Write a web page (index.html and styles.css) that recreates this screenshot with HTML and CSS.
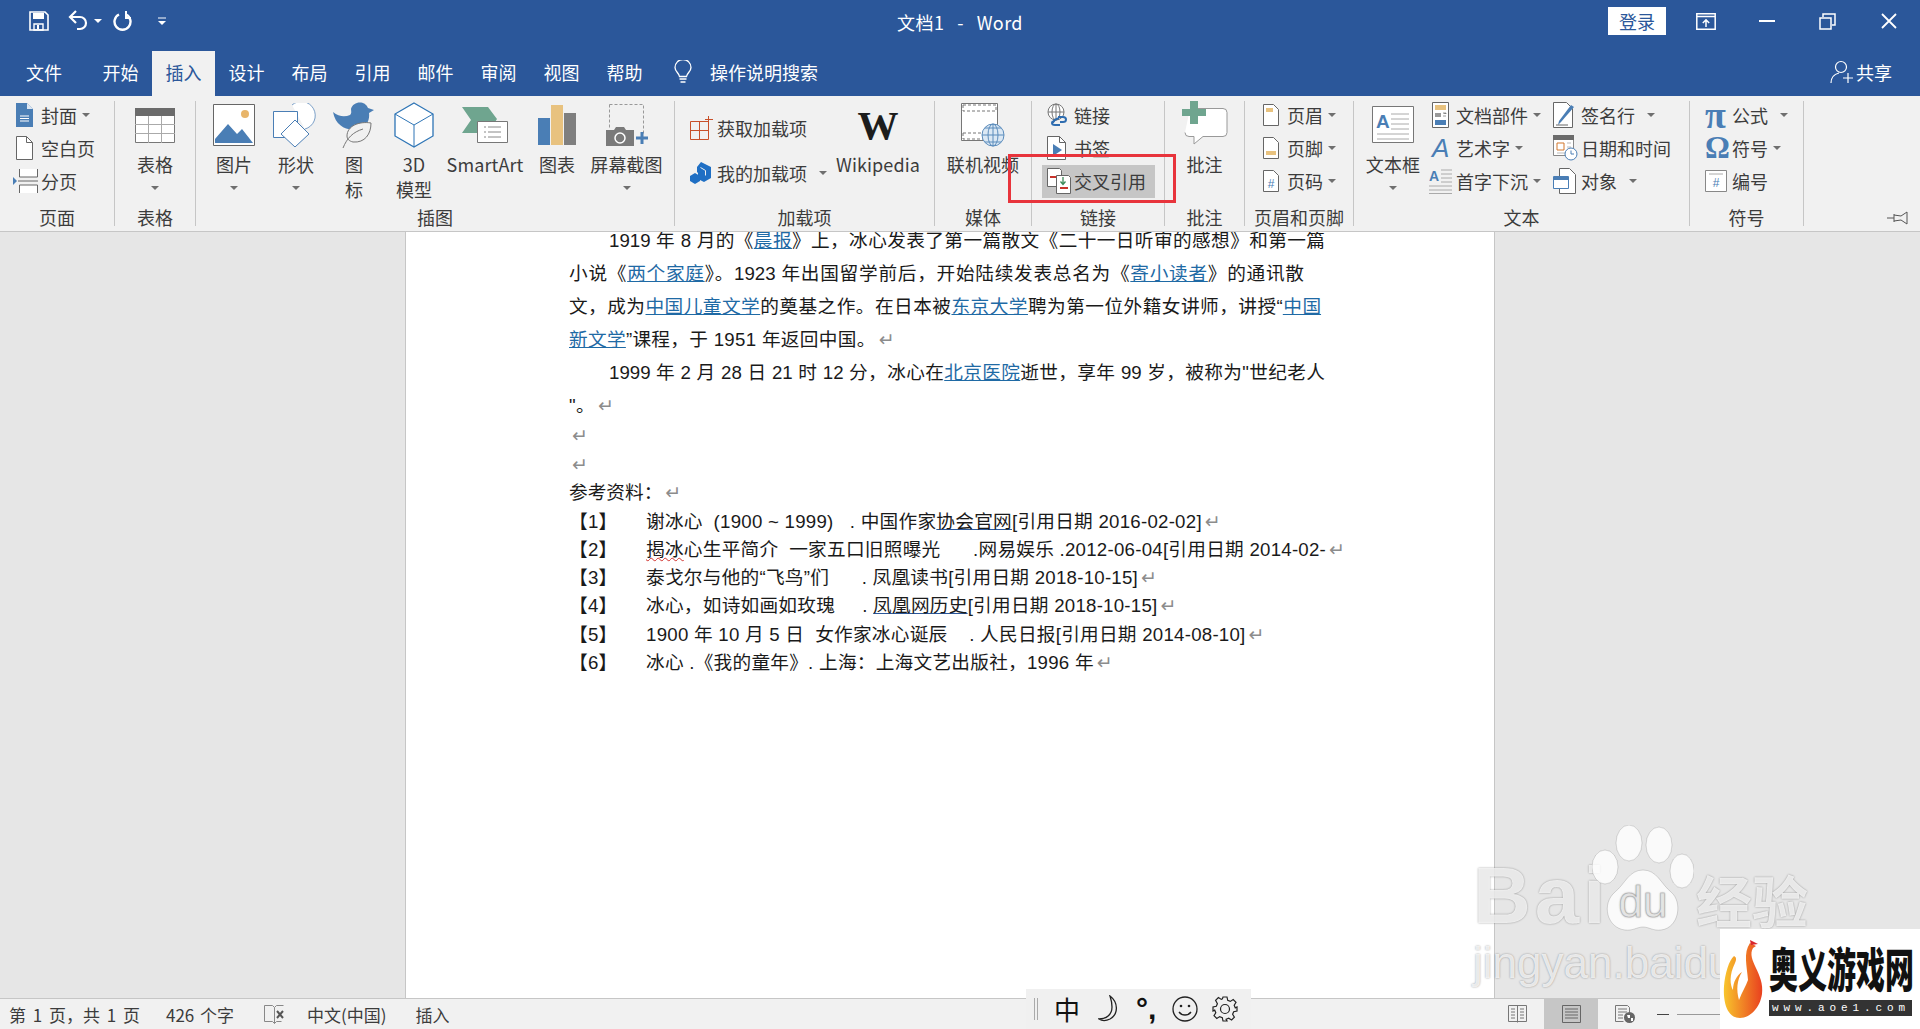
FILE: index.html
```html
<!DOCTYPE html>
<html lang="zh-CN">
<head>
    <meta charset="UTF-8">
    <title>文档1 - Word</title>
    <link rel="stylesheet" href="styles.css">
</head>
<body>
    <header class="titlebar">
        <div class="qat">
            <svg class="qat-save" width="20" height="20" viewBox="0 0 20 20"><path d="M1 1h15l3 3v15H1z" fill="none" stroke="#fff" stroke-width="1.6"/><path d="M4 2h11v6H4z" fill="#fff"/><path d="M5 13h9v6H5z" fill="none" stroke="#fff" stroke-width="1.4"/><path d="M8 14h2v4H8z" fill="#fff"/></svg>
            <svg class="qat-undo" width="22" height="22" viewBox="0 0 22 22"><path d="M3 7h10a5.500 5.500 0 0 1 0 12h-3" fill="none" stroke="#fff" stroke-width="2.2"/><path d="M9 1L3 7l6 6" fill="none" stroke="#fff" stroke-width="2.2"/></svg>
            <i class="caret caret-white qat-caret"></i>
            <svg class="qat-redo" width="20" height="22" viewBox="0 0 20 22"><path d="M7 4.500a8 8 0 1 0 7 0" fill="none" stroke="#fff" stroke-width="2.4"/><path d="M14 1v7h5" fill="none" stroke="#fff" stroke-width="2"/></svg>
            <svg class="qat-more" width="8" height="9" viewBox="0 0 8 9"><path d="M0 1h8" stroke="#fff"/><path d="M0 4h8l-4 4z" fill="#fff"/></svg>
        </div>
        <div class="doc-title">文档1 &nbsp;-&nbsp; Word</div>
        <div class="win-controls">
            <button class="login-btn">登录</button>
            <div class="win-btn"><svg width="20" height="17" viewBox="0 0 20 17"><path d="M.8.800h18.400v15.400H.8z" fill="none" stroke="#fff" stroke-width="1.500"/><path d="M1 3.500h18" stroke="#fff" stroke-width="1.500"/><path d="M10 14V7M6.800 10L10 6.800l3.200 3.200" fill="none" stroke="#fff" stroke-width="1.500"/></svg></div>
            <div class="win-btn"><svg width="16" height="2" viewBox="0 0 16 2"><path d="M0 1h16" stroke="#fff" stroke-width="2"/></svg></div>
            <div class="win-btn"><svg width="17" height="17" viewBox="0 0 17 17"><path d="M1 5h11v11H1z" fill="none" stroke="#fff" stroke-width="1.500"/><path d="M4 4V1h12v11h-3" fill="none" stroke="#fff" stroke-width="1.500"/></svg></div>
            <div class="win-btn"><svg width="16" height="16" viewBox="0 0 16 16"><path d="M1 1l14 14M15 1L1 15" stroke="#fff" stroke-width="1.800"/></svg></div>
        </div>
    </header>

    <nav class="tabs">
        <a class="tab tab-file">文件</a>
        <a class="tab">开始</a>
        <a class="tab active">插入</a>
        <a class="tab">设计</a>
        <a class="tab">布局</a>
        <a class="tab">引用</a>
        <a class="tab">邮件</a>
        <a class="tab">审阅</a>
        <a class="tab">视图</a>
        <a class="tab">帮助</a>
        <div class="tell-me">
            <svg width="20" height="24" viewBox="0 0 20 24"><path d="M6.500 16.500C6 13 2 11.500 2 7.500a8 8 0 0 1 16 0c0 4-4 5.500-4.500 9z" fill="none" stroke="#fff" stroke-width="1.300"/><path d="M6.500 19h7M7.500 22h5" stroke="#fff" stroke-width="1.500"/></svg>
            <span>操作说明搜索</span>
        </div>
        <div class="share">
            <svg width="24" height="24" viewBox="0 0 24 24"><circle cx="11" cy="7" r="5.500" fill="none" stroke="#fff" stroke-width="1.200"/><path d="M1 23c0-6 4-9 8-10" fill="none" stroke="#fff" stroke-width="1.200"/><path d="M13 18h10M18 13v10" stroke="#fff" stroke-width="1.200"/></svg>
            <span>共享</span>
        </div>
    </nav>

    <div class="ribbon">
        <section class="group g-pages">
            <div class="group-body col">
                <div class="row"><span class="ico"><svg width="17" height="24" viewBox="0 0 17 24"><path d="M0 0h11l6 6v18H0z" fill="#4a7eb5"/><path d="M11 0v6h6" fill="#dce6f1"/><path d="M4 13h9M4 15.500h9M4 18h9" stroke="#fff"/></svg></span>封面<i class="caret"></i></div>
                <div class="row"><span class="ico"><svg width="17" height="24" viewBox="0 0 17 24"><path d="M.5.500h10l6 6v17H.5z" fill="#fff" stroke="#666"/><path d="M10.500.500v6h6" fill="none" stroke="#666"/></svg></span>空白页</div>
                <div class="row"><span class="ico ico-break"><svg width="25" height="24" viewBox="0 0 25 24"><path d="M0 8l4 4-4 4z" fill="#4a7eb5"/><path d="M6.500 0v8h18V0M6.500 24v-8h18v8" fill="#fff" stroke="#666"/><path d="M5 12h20" stroke="#666"/></svg></span>分页</div>
            </div>
            <div class="group-label">页面</div>
        </section>
        <i class="sep"></i>
        <section class="group g-table">
            <div class="group-body">
                <div class="big">
                    <span class="big-ico"><svg width="40" height="35" viewBox="0 0 40 35"><path d="M.5.500h39v34H.5z" fill="#fff" stroke="#777"/><path d="M0 0h40v8H0z" fill="#6b6b6b"/><path d="M0 16.500h40M0 25.500h40M13.500 8v27M26.500 8v27" stroke="#aaa"/></svg></span>
                    <span class="big-label">表格</span><i class="caret"></i>
                </div>
            </div>
            <div class="group-label">表格</div>
        </section>
        <i class="sep"></i>
        <section class="group g-illus">
            <div class="group-body">
                <div class="big">
                    <span class="big-ico"><svg width="42" height="42" viewBox="0 0 42 42"><path d="M.5.500h41v41H.5z" fill="#fff" stroke="#666"/><circle cx="32" cy="10" r="4" fill="#e8b56a"/><path d="M2 39V35L15 20l9 10 5-5 11 14z" fill="#4a7eb5"/></svg></span>
                    <span class="big-label">图片</span><i class="caret"></i>
                </div>
                <div class="big">
                    <span class="big-ico"><svg width="46" height="44" viewBox="0 0 46 44"><path d="M19 2a14 14 0 1 1 13 24" fill="#fff" stroke="#7ba0c8"/><path d="M.5 8.500h24v26H.5z" fill="#fff" stroke="#4a7eb5"/><path d="M22 17l14 14-14 13L8 31z" fill="#fff" stroke="#4a7eb5"/></svg></span>
                    <span class="big-label">形状</span><i class="caret"></i>
                </div>
                <div class="big">
                    <span class="big-ico"><svg width="42" height="46" viewBox="0 0 42 46"><path d="M18 7c2-8 14-9 17-1l6 2-5 3c1 8-3 13-9 15-10 4-24 0-27-16 6 5 12 5 17 3 2-2 1-4 1-6z" fill="#4a7eb5"/><path d="M38 21C26 19 14 24 14 34c0 3 2 5 6 6 12 1 18-8 18-19z" fill="#f1f1f1" stroke="#777"/><path d="M10 46c4-10 10-16 20-19" fill="none" stroke="#777"/></svg></span>
                    <span class="big-label">图<br>标</span>
                </div>
                <div class="big">
                    <span class="big-ico"><svg width="40" height="46" viewBox="0 0 40 46"><path d="M20 1l19 11v22L20 45 1 34V12z" fill="#fff" stroke="#2e75b6" stroke-width="1.300"/><path d="M1 12l19 11 19-11M20 23v22" fill="none" stroke="#2e75b6"/></svg></span>
                    <span class="big-label">3D<br>模型</span>
                </div>
                <div class="big">
                    <span class="big-ico"><svg width="46" height="36" viewBox="0 0 46 36"><path d="M0 0h26l9 12-9 14H0l9-13z" fill="#6fa58f"/><path d="M15.500 14.500h30v21h-30z" fill="#fff" stroke="#777"/><path d="M22 20h2M22 25h2M22 30h2M26 20h13M26 25h13M26 30h13" stroke="#888"/></svg></span>
                    <span class="big-label">SmartArt</span>
                </div>
                <div class="big">
                    <span class="big-ico"><svg width="38" height="40" viewBox="0 0 38 40"><path d="M0 13h12v27H0z" fill="#4a7eb5"/><path d="M13 0h12v40H13z" fill="#e8c27f"/><path d="M26 8h12v32H26z" fill="#7f7f7f"/></svg></span>
                    <span class="big-label">图表</span>
                </div>
                <div class="big">
                    <span class="big-ico"><svg width="42" height="42" viewBox="0 0 42 42"><path d="M3.500.500h34v30" fill="none" stroke="#999" stroke-dasharray="3 2"/><path d="M3.500.500v24" fill="none" stroke="#999" stroke-dasharray="3 2"/><path d="M0 26h8l2-3h8l2 3h8v16H0z" fill="#7a7a7a"/><circle cx="14" cy="34" r="5" fill="#7a7a7a" stroke="#fff" stroke-width="1.500"/><path d="M30 34h12M36 28v12" stroke="#4a7eb5" stroke-width="3"/></svg></span>
                    <span class="big-label">屏幕截图</span><i class="caret"></i>
                </div>
            </div>
            <div class="group-label">插图</div>
        </section>
        <i class="sep"></i>
        <section class="group g-addins">
            <div class="group-body">
                <div class="addin-col">
                    <div class="addin-row"><span class="ico"><svg width="23" height="24" viewBox="0 0 23 24"><path d="M.5 5.500h18v18H.5zM.5 14.500h18M9.500 5.500v18" fill="none" stroke="#c8502a"/><path d="M18.500 0v8M15 3.500h8" stroke="#c8502a"/></svg></span>获取加载项</div>
                    <div class="addin-row"><span class="ico"><svg width="21" height="22" viewBox="0 0 21 22"><path d="M11 0l10 5v11l-7 4-6-3v-6l-1-1V5z" fill="#1f6fc4"/><path d="M5 11l5 3v5l-5 3-5-3v-5z" fill="#1f6fc4"/><path d="M10.500 5.500l5 3v5" fill="none" stroke="#f1f1f1"/></svg></span>我的加载项<i class="caret caret-far"></i></div>
                </div>
                <div class="big big-wiki">
                    <span class="big-ico"><span class="wiki-w">W</span></span>
                    <span class="big-label">Wikipedia</span>
                </div>
            </div>
            <div class="group-label">加载项</div>
        </section>
        <i class="sep"></i>
        <section class="group g-media">
            <div class="group-body">
                <div class="big">
                    <span class="big-ico"><svg width="44" height="44" viewBox="0 0 44 44"><path d="M.5.500h36v37H.5z" fill="#fff" stroke="#777"/><path d="M2 2h33v6H2zM2 30h33v6H2z" fill="none" stroke="#777" stroke-dasharray="3 2"/><circle cx="32" cy="32" r="11" fill="#dbe8f4" stroke="#5b8cbc"/><path d="M21 32h22M32 21v22M24 25h16M24 39h16" stroke="#5b8cbc" fill="none"/><ellipse cx="32" cy="32" rx="5" ry="11" fill="none" stroke="#5b8cbc"/></svg></span>
                    <span class="big-label">联机视频</span>
                </div>
            </div>
            <div class="group-label">媒体</div>
        </section>
        <i class="sep"></i>
        <section class="group g-links">
            <div class="group-body col">
                <div class="row"><span class="ico"><svg width="20" height="24" viewBox="0 0 20 24"><circle cx="9" cy="9" r="8" fill="#fff" stroke="#777"/><path d="M1 9h16M9 1v16" stroke="#777"/><ellipse cx="9" cy="9" rx="4" ry="8" fill="none" stroke="#777"/><path d="M6 20c0-3 3-4 6-5M11 14h5c4 0 4 5 0 5h-3M13 22H8c-4 0-4-4 0-4" fill="none" stroke="#2f6db0" stroke-width="2"/></svg></span>链接</div>
                <div class="row"><span class="ico"><svg width="19" height="24" viewBox="0 0 19 24"><path d="M.5.500h12l6 6v17H.5z" fill="#fff" stroke="#666"/><path d="M12.500.500v6h6" fill="none" stroke="#666"/><path d="M6 8l9 6-9 6z" fill="#4a7eb5"/></svg></span>书签</div>
                <div class="row row-on"><span class="ico"><svg width="24" height="26" viewBox="0 0 24 26"><path d="M.5.500h12l2 2v16H.5z" fill="#fff" stroke="#666"/><path d="M3 9h8" stroke="#c8342c" stroke-width="2"/><path d="M9.500 7.500h12l2 2v16h-14z" fill="#fff" stroke="#666"/><path d="M16 9v7M13.500 13.500l2.500 3 2.500-3" fill="none" stroke="#3c8a5a" stroke-width="1.300"/><path d="M13 20h8" stroke="#c8342c" stroke-width="2"/></svg></span>交叉引用</div>
            </div>
            <div class="group-label">链接</div>
        </section>
        <i class="sep"></i>
        <section class="group g-comment">
            <div class="group-body">
                <div class="big">
                    <span class="big-ico big-ico-top"><svg width="46" height="44" viewBox="0 0 46 44"><path d="M8 7.500h33q4 0 4 4v20q0 4-4 4H21L12 43v-7.500H7q-4 0-4-4" fill="#fff" stroke="#999"/><path d="M8 0h8v8h8v7h-8v8H8v-8H0V8h8z" fill="#6fa58f"/></svg></span>
                    <span class="big-label">批注</span>
                </div>
            </div>
            <div class="group-label">批注</div>
        </section>
        <i class="sep"></i>
        <section class="group g-header">
            <div class="group-body col">
                <div class="row"><span class="ico"><svg width="16" height="22" viewBox="0 0 16 22"><path d="M.5.500h10l5 5v16H.5z" fill="#fff" stroke="#666"/><path d="M3 4h7v4H3z" fill="#e8c27f"/></svg></span>页眉<i class="caret"></i></div>
                <div class="row"><span class="ico"><svg width="16" height="22" viewBox="0 0 16 22"><path d="M.5.500h10l5 5v16H.5z" fill="#fff" stroke="#666"/><path d="M3 14h10v4H3z" fill="#e8c27f"/></svg></span>页脚<i class="caret"></i></div>
                <div class="row"><span class="ico"><svg width="16" height="22" viewBox="0 0 16 22"><path d="M.5.500h10l5 5v16H.5z" fill="#fff" stroke="#666"/><text class="ico-hash" x="8" y="18" text-anchor="middle">#</text></svg></span>页码<i class="caret"></i></div>
            </div>
            <div class="group-label">页眉和页脚</div>
        </section>
        <i class="sep"></i>
        <section class="group g-text">
            <div class="group-body">
                <div class="big">
                    <span class="big-ico"><svg width="43" height="38" viewBox="0 0 43 38"><path d="M.5.500h41v36H.5z" fill="#fff" stroke="#777"/><text class="ico-a" x="4" y="22">A</text><path d="M19 8h18M19 13h18M19 18h18M19 23h18M5 28h32M5 33h32" stroke="#aaa"/></svg></span>
                    <span class="big-label">文本框</span><i class="caret"></i>
                </div>
                <div class="col">
                    <div class="row"><span class="ico"><svg width="17" height="26" viewBox="0 0 17 26"><path d="M.5.500h16v25H.5z" fill="#fff" stroke="#666"/><path d="M3 3h11v5H3z" fill="#e8c27f"/><path d="M3 11h6v4H3z" fill="#999"/><path d="M11 11h3v1M11 14h3" stroke="#999"/><path d="M3 18h11v5H3z" fill="#4a7eb5"/></svg></span>文档部件<i class="caret"></i></div>
                    <div class="row"><span class="ico"><span class="wordart-a">A</span></span>艺术字<i class="caret"></i></div>
                    <div class="row"><span class="ico ico-drop"><svg width="23" height="26" viewBox="0 0 23 26"><text class="ico-a-small" x="0" y="13">A</text><path d="M12 2h11M12 6h11M12 10h11M12 14h11M0 18h23M0 22h23M0 25.500h23" stroke="#aaa"/></svg></span>首字下沉<i class="caret"></i></div>
                </div>
                <div class="col">
                    <div class="row"><span class="ico"><svg width="22" height="26" viewBox="0 0 22 26"><path d="M.5.500h13l6 6v19H.5z" fill="#fff" stroke="#666"/><path d="M21 5L8 20l-3 3 1-4L18 3z" fill="#4a7eb5"/><path d="M3 23h12" stroke="#666"/></svg></span>签名行<i class="caret caret-far"></i></div>
                    <div class="row"><span class="ico"><svg width="25" height="26" viewBox="0 0 25 26"><path d="M.5.500h20v20H.5z" fill="#fff" stroke="#888"/><path d="M0 0h21v5H0z" fill="#6b6b6b"/><path d="M4 8h7v7H4z" fill="#fff" stroke="#d2772c"/><path d="M14 8h4M14 12h4M4 18h14" stroke="#bbb"/><circle cx="18" cy="19" r="6" fill="#fff" stroke="#4a7eb5"/><path d="M18 15.500V19h3" fill="none" stroke="#4a7eb5"/></svg></span>日期和时间</div>
                    <div class="row"><span class="ico"><svg width="23" height="26" viewBox="0 0 23 26"><path d="M6.500.500h10l6 6v19h-16z" fill="#fff" stroke="#666"/><path d="M.5 8.500h15v12H.5z" fill="#fff" stroke="#4a7eb5"/><path d="M1 9h14v3H1z" fill="#4a7eb5"/></svg></span>对象<i class="caret caret-far"></i></div>
                </div>
            </div>
            <div class="group-label">文本</div>
        </section>
        <i class="sep"></i>
        <section class="group g-symbols">
            <div class="group-body col">
                <div class="row"><span class="ico"><span class="math math-pi">π</span></span>公式<i class="caret caret-far"></i></div>
                <div class="row"><span class="ico"><span class="math">Ω</span></span>符号<i class="caret"></i></div>
                <div class="row"><span class="ico"><svg width="22" height="22" viewBox="0 0 22 22"><path d="M.5.500h21v21H.5z" fill="#fff" stroke="#888"/><path d="M4 4h14" stroke="#aaa"/><text class="ico-hash" x="11" y="17" text-anchor="middle">#</text></svg></span>编号</div>
            </div>
            <div class="group-label">符号</div>
        </section>
        <i class="sep"></i>
        <div class="g-pin">
            <svg width="22" height="14" viewBox="0 0 22 14"><path d="M0 7h7M7 3v8M7 4l7 1 6-4v12l-6-4-7 1" fill="none" stroke="#555"/></svg>
        </div>
    </div>

    <main class="doc-area">
        <div class="page">
            <div class="page-text">
                <p class="line indent fit-a">1919 年 8 月的《<a class="link">晨报</a>》上，冰心发表了第一篇散文《二十一日听审的感想》和第一篇</p>
                <p class="line fit-b">小说《<a class="link">两个家庭</a>》。1923 年出国留学前后，开始陆续发表总名为《<a class="link">寄小读者</a>》的通讯散</p>
                <p class="line fit-c">文，成为<a class="link">中国儿童文学</a>的奠基之作。在日本被<a class="link">东京大学</a>聘为第一位外籍女讲师，讲授“<a class="link">中国</a></p>
                <p class="line"><a class="link">新文学</a>”课程，于 1951 年返回中国。<span class="pm">↵</span></p>
                <p class="line indent fit-a">1999 年 2 月 28 日 21 时 12 分，冰心在<a class="link">北京医院</a>逝世，享年 99 岁，被称为"世纪老人</p>
                <p class="line">"。<span class="pm">↵</span></p>
                <p class="line-sm"><span class="pm">↵</span></p>
                <p class="line-sm"><span class="pm">↵</span></p>
                <p class="line-sm">参考资料：<span class="pm">↵</span></p>
                <ol class="refs">
                    <li><span>【1】</span><span>谢冰心  (1900 ~ 1999)   . 中国作家<u>协会官网</u>[引用日期 2016-02-02]<span class="pm">↵</span></span></li>
                    <li><span>【2】</span><span><span class="typo">揭冰</span>心生平简介  一家五口旧照曝光      .网易娱乐 .2012-06-04[引用日期 2014-02-<span class="pm">↵</span></span></li>
                    <li><span>【3】</span><span>泰戈尔与他的“飞鸟”们      . 凤凰读书[引用日期 2018-10-15]<span class="pm">↵</span></span></li>
                    <li><span>【4】</span><span>冰心，如诗如画如玫瑰     . <u>凤凰网历史</u>[引用日期 2018-10-15]<span class="pm">↵</span></span></li>
                    <li><span>【5】</span><span>1900 年 10 月 5 日  女作家冰心诞辰    . 人民日报[引用日期 2014-08-10]<span class="pm">↵</span></span></li>
                    <li><span>【6】</span><span>冰心 .《我的童年》. 上海：上海文艺出版社，1996 年<span class="pm">↵</span></span></li>
                </ol>
            </div>
        </div>
    </main>

    <footer class="statusbar">
        <span class="st-pages">第 1 页，共 1 页</span>
        <span class="st-words">426 个字</span>
        <svg class="st-proof" width="21" height="20" viewBox="0 0 21 20"><path d="M.5 1.500h8l2 2 2-2h7M.5 1.500v16h8l2 2 2-2h5M10.500 3.500v16" fill="none" stroke="#888"/><path d="M13 7l6 7M19 7l-6 7" stroke="#555" stroke-width="2"/></svg>
        <span class="st-lang">中文(中国)</span>
        <span class="st-mode">插入</span>
        <div class="st-right">
            <div class="view-btn"><svg width="19" height="18" viewBox="0 0 19 18"><path d="M.5.500h18v16h-18zM9.500.500v17M3 4h4M3 7h4M3 10h4M3 13h4M12 4h4M12 7h4M12 10h4M12 13h4" fill="none" stroke="#777"/></svg></div>
            <div class="view-btn view-on"><svg width="19" height="18" viewBox="0 0 19 18"><path d="M.5.500h18v17H.5zM3 4h13M3 7h13M3 10h13M3 13h13" fill="none" stroke="#666"/></svg></div>
            <div class="view-btn"><svg width="20" height="18" viewBox="0 0 20 18"><path d="M.5.500h12l2 2v5M.5.500v16h8M3 4h9M3 7h9M3 10h5M3 13h5" fill="none" stroke="#777"/><circle cx="14.500" cy="12.500" r="5.500" fill="#666"/><path d="M12 10h3v3h-2zM16 13h2v3h-2z" fill="#fff"/></svg></div>
            <span class="zoom-minus"></span>
            <span class="zoom-track"></span>
        </div>
    </footer>

    <!-- things that lie over the screenshot -->
    <div class="red-box"></div>

    <div class="watermark">
        <div class="wm-top">
            <span class="wm-bai">Bai</span>
            <svg class="wm-paw" width="102" height="110" viewBox="0 0 102 110"><ellipse cx="13" cy="42" rx="13" ry="17"/><ellipse cx="37" cy="18" rx="13" ry="18"/><ellipse cx="67" cy="20" rx="13" ry="18"/><ellipse cx="90" cy="46" rx="12" ry="17"/><path d="M51 45c14 0 18 14 28 22 12 10 8 36-10 38-8 1-12-3-18-3s-10 4-18 3c-18-2-24-26-10-38 10-8 14-22 28-22z"/><text x="51" y="92" text-anchor="middle">du</text></svg>
            <span class="wm-jy">经验</span>
        </div>
        <div class="wm-url">jingyan.baidu</div>
    </div>

    <div class="ime-bar">
        <i class="ime-grip"></i>
        <span class="ime-zh">中</span>
        <svg width="24" height="28" viewBox="0 0 24 28"><path d="M12 1c8 6 9 18 0 23-4 2-8 2-11 0 7 0 13-4 13-12 0-4-1-8-2-11z" fill="none" stroke="#222" stroke-width="1.300"/></svg>
        <span class="ime-punc">°,</span>
        <svg width="26" height="26" viewBox="0 0 26 26"><circle cx="13" cy="13" r="12" fill="none" stroke="#222" stroke-width="1.300"/><circle cx="9" cy="10" r="1.300" fill="#222"/><circle cx="17" cy="10" r="1.300" fill="#222"/><path d="M7 16c3 4 9 4 12 0" fill="none" stroke="#222" stroke-width="1.300"/></svg>
        <svg width="26" height="26" viewBox="0 0 26 26"><path d="M11 1h4l.7 3.300 2.600 1.100 2.900-1.800 2.800 2.800-1.800 2.900 1.100 2.600L25 11v4l-3.300.7-1.100 2.600 1.800 2.900-2.800 2.800-2.900-1.800-2.600 1.100L15 25h-4l-.7-3.300-2.600-1.100-2.900 1.800L2 19.600l1.800-2.900-1.100-2.600L1 15v-4l3.300-.7 1.100-2.600L3.600 4.400l2.800-2.800 2.900 1.800 1.100-.5z" fill="none" stroke="#222" stroke-width="1.200"/><circle cx="13" cy="13" r="4.500" fill="none" stroke="#222" stroke-width="1.200"/></svg>
    </div>

    <div class="site-logo">
        <svg width="42" height="80" viewBox="0 0 42 80">
            <defs><linearGradient id="flame" x1="0" y1="0" x2="1" y2="0"><stop offset="0" stop-color="#f8c52c"/><stop offset="1" stop-color="#e9401f"/></linearGradient></defs>
            <path d="M27 5l6 3-3 2c-7 12 12 26 9 46-2 14-12 24-22 24C4 80 0 64 1 48 2 36 6 22 11 18c2 1 3 3 1 7-6 12-5 22-2 27 0-8 4-15 9-18-5 8-6 18-3 28 3-8 7-14 9-20C24 28 20 15 27 5z" fill="url(#flame)"/>
            <path d="M27 2l8 4-7 1z" fill="#d8262c"/>
        </svg>
        <div class="logo-right">
            <div class="logo-name">奥义游戏网</div>
            <div class="logo-url">www.aoe1.com</div>
        </div>
    </div>
</body>
</html>
```

FILE: styles.css
```css
* {
    margin: 0;
    padding: 0;
    box-sizing: border-box;
}

html, body {
    height: 100%;
}

body {
    position: relative;
    display: flex;
    flex-direction: column;
    overflow: hidden;
    font-family: "Noto Sans CJK SC", "Liberation Sans", sans-serif;
    font-size: 18px;
    color: #3c3c3c;
    background: #e6e6e6;
}

/* title bar */
.titlebar {
    display: grid;
    grid-template-columns: 1fr auto 1fr;
    height: 48px;
    background: #2b579a;
    color: #fff;
}

.qat, .win-controls {
    display: flex;
}

.qat {
    align-items: center;
    height: 42px;
    padding-left: 29px;
}

.qat-undo {
    margin-left: 18px;
}

.qat-caret {
    margin-left: 11px;
}

.qat-redo {
    margin-left: 10px;
}

.qat-more {
    margin-left: 26px;
}

.doc-title {
    font-size: 18px;
    line-height: 44px;
    letter-spacing: 0.4px;
    word-spacing: 2px;
    white-space: nowrap;
}

.win-controls {
    justify-content: flex-end;
    padding-right: 1px;
}

.login-btn {
    width: 58px;
    height: 28px;
    margin: 7px 9px 0 0;
    border: none;
    background: #fff;
    color: #2b579a;
    font: inherit;
    font-size: 18px;
    line-height: 26px;
}

.win-btn {
    display: flex;
    justify-content: center;
    align-items: center;
    width: 61px;
    height: 42px;
}

/* tab row */
.tabs {
    display: flex;
    height: 48px;
    padding-left: 6px;
    background: #2b579a;
    color: #fff;
}

.tab {
    width: 63px;
    margin-top: 3px;
    text-align: center;
    line-height: 43px;
}

.tab-file {
    width: 76px;
    margin-right: 7px;
}

.tab.active {
    background: #f1f1f1;
    color: #2b579a;
}

.tell-me {
    display: flex;
    align-items: center;
    gap: 17px;
    margin-left: 17px;
}

.share {
    display: flex;
    align-items: center;
    gap: 2px;
    margin-left: auto;
    padding-right: 28px;
}

/* ribbon */
.ribbon {
    display: flex;
    flex: none;
    height: 136px;
    padding-top: 3px;
    background: #f1f1f1;
    border-bottom: 1px solid #c6c6c6;
    white-space: nowrap;
}

.sep {
    flex: none;
    width: 1px;
    margin: 2px 0 5px;
    background: #c6c6c6;
}

.group {
    display: flex;
    flex: none;
    flex-direction: column;
}

.group-body {
    display: grid;
    grid-auto-flow: column;
    height: 106px;
}

.group-label {
    height: 26px;
    line-height: 24px;
    text-align: center;
}

.g-pages { width: 114px; }
.g-table { width: 80px; }
.g-illus { width: 478px; }
.g-addins { width: 259px; }
.g-media { width: 96px; }
.g-links { width: 132px; }
.g-comment { width: 79px; }
.g-header { width: 108px; }
.g-text { width: 335px; }
.g-symbols { width: 113px; }

.g-pages .group-body { padding-left: 16px; }
.g-illus .group-body {
    grid-template-columns: 62px 62px 54px 66px 76px 68px 71px;
    justify-content: start;
    padding-left: 7px;
}
.g-addins .group-body {
    grid-template-columns: 145px 86px;
    justify-content: start;
    padding-left: 15px;
}
.g-links .group-body { padding: 0 9px 0 10px; }
.g-header .group-body { padding-left: 18px; }
.g-text .group-body {
    grid-template-columns: 78px 121px auto;
    justify-content: start;
}
.g-symbols .group-body { padding-left: 15px; }

.g-links .row { padding-left: 5px; }

.g-pin {
    flex: 1;
    display: flex;
    justify-content: flex-end;
    align-items: flex-end;
    padding: 0 11px 6px 0;
}

.col {
    display: flex;
    flex-direction: column;
}

.row {
    display: flex;
    align-items: center;
    height: 33px;
    padding-bottom: 2px;
}

.ico {
    display: flex;
    flex: none;
    align-items: center;
    width: 25px;
}

.g-links .ico, .g-addins .ico, .g-symbols .ico { width: 27px; }
.g-header .ico { width: 24px; }
.g-text .col .ico { width: 24px; }
.g-text .col + .col .ico { width: 28px; }

.ico-drop, .ico-break {
    margin-left: -3px;
    margin-right: 3px;
}

.big {
    display: flex;
    flex-direction: column;
    align-items: center;
}

.big-ico {
    display: flex;
    justify-content: center;
    align-items: center;
    height: 52px;
    margin-bottom: 1px;
}

.big-ico-top {
    padding-bottom: 4px;
}

.big-label {
    line-height: 25px;
    letter-spacing: 0.1px;
    text-align: center;
}

.big .caret {
    margin: 9px 0 0;
}

.caret {
    flex: none;
    display: inline-block;
    width: 0;
    height: 0;
    margin-left: 5px;
    border-style: solid;
    border-width: 4px 4px 0;
    border-color: #6f6f6f transparent transparent;
}

.caret-far {
    margin-left: 12px;
}

.caret-white {
    border-top-color: #fff;
}

.addin-col {
    padding-top: 6px;
}

.addin-row {
    display: flex;
    align-items: center;
    height: 45px;
}

.wiki-w {
    font-family: "Liberation Serif", serif;
    font-size: 41px;
    font-weight: bold;
    line-height: 44px;
    color: #1c1c1c;
}

.wordart-a {
    font-family: "Liberation Sans", sans-serif;
    font-size: 26px;
    font-style: italic;
    line-height: 26px;
    color: #4a7eb5;
}

.math {
    font-family: "Liberation Serif", serif;
    font-size: 31px;
    font-weight: bold;
    line-height: 28px;
    color: #4a7eb5;
}

.math-pi {
    font-size: 38px;
    line-height: 26px;
}

.ico-a {
    font-family: "Liberation Sans", sans-serif;
    font-size: 19px;
    font-weight: bold;
    fill: #4a7eb5;
}

.ico-a-small {
    font-family: "Liberation Sans", sans-serif;
    font-size: 14px;
    font-weight: bold;
    fill: #4a7eb5;
}

.ico-hash {
    font-family: "Liberation Sans", sans-serif;
    font-size: 12px;
    fill: #4a7eb5;
}

.row-on {
    background: #c6c6c6;
}

/* document */
.doc-area {
    flex: 1;
    display: flex;
    min-height: 0;
    padding-left: 405px;
}

.page {
    width: 1090px;
    overflow: hidden;
    background: #fff;
    border-left: 1px solid #c6c6c6;
    border-right: 1px solid #c6c6c6;
}

.page-text {
    width: 780px;
    margin: -8px 0 0 163px;
    font-family: "Liberation Sans", "Noto Sans CJK SC", sans-serif;
    font-size: 18.67px;
    color: #1a1a1a;
}

.line {
    line-height: 33px;
    letter-spacing: 0.3px;
}

/* word justified these lines to the page edge, ends differ a bit */
.fit-a, .fit-b, .fit-c {
    letter-spacing: 0;
    text-align-last: justify;
}

.fit-a { width: 756px; }
.fit-b { width: 735px; }
.fit-c { width: 752px; }

.indent {
    padding-left: 40px;
}

.line-sm {
    line-height: 28.500px;
}

.link {
    color: #1f6aa5;
    text-decoration: underline;
}

.pm {
    margin-left: 3px;
    font-family: "DejaVu Sans", sans-serif;
    font-size: 19px;
    line-height: 0;
    color: #8c8c8c;
}

.refs {
    list-style: none;
}

.refs li {
    display: flex;
    line-height: 28.300px;
    letter-spacing: 0.25px;
    white-space: pre;
}

.refs li > span:first-child {
    width: 77px;
    flex: none;
}

.refs u {
    text-decoration-color: #2b579a;
}

.typo {
    text-decoration: underline wavy #d0312d;
    text-decoration-thickness: 1px;
}

/* status bar */
.statusbar {
    display: flex;
    flex: none;
    align-items: center;
    height: 31px;
    padding-left: 9px;
    background: #f1f1f1;
    border-top: 1px solid #c6c6c6;
    font-size: 17px;
    white-space: nowrap;
}

.st-pages {
    width: 132px;
    word-spacing: 3px;
}

.st-words {
    width: 69px;
    margin-left: 25px;
    word-spacing: 2px;
}

.st-proof { margin-left: 29px; }
.st-lang { margin-left: 22px; }
.st-mode { margin-left: 29px; }

.st-right {
    display: flex;
    align-items: center;
    width: 430px;
    height: 100%;
    margin-left: auto;
}

.view-btn {
    display: flex;
    justify-content: center;
    align-items: center;
    width: 54px;
    height: 100%;
}

.view-on {
    background: #c6c6c6;
}

.zoom-minus {
    width: 12px;
    height: 1px;
    margin-left: 5px;
    background: #444;
}

.zoom-track {
    flex: 1;
    height: 1px;
    margin-left: 8px;
    background: #999;
}

/* overlays */
.red-box {
    position: absolute;
    left: 1008px;
    top: 154px;
    width: 168px;
    height: 49px;
    border: 3px solid #e8343c;
}

.watermark {
    position: absolute;
    left: 1473px;
    top: 825px;
    font-family: "Liberation Sans", sans-serif;
    color: rgba(255, 255, 255, 0.8);
    text-shadow: 0 0 2px rgba(0, 0, 0, 0.4);
    white-space: nowrap;
}

.wm-top {
    display: flex;
    align-items: flex-end;
    height: 110px;
}

.wm-bai {
    width: 119px;
    font-size: 80px;
    font-weight: bold;
    line-height: 78px;
    letter-spacing: 4px;
}

.wm-paw {
    fill: rgba(255, 255, 255, 0.8);
    stroke: rgba(0, 0, 0, 0.14);
}

.wm-paw text {
    font-size: 44px;
    fill: #e6e6e6;
}

.wm-jy {
    margin-left: 2px;
    font-family: "Noto Sans CJK SC", sans-serif;
    font-size: 56px;
    font-weight: bold;
    line-height: 72px;
}

.wm-url {
    margin-top: 3px;
    font-size: 44px;
    line-height: 50px;
}

.ime-bar {
    position: absolute;
    left: 1026px;
    bottom: 0;
    display: flex;
    align-items: center;
    width: 225px;
    height: 40px;
    padding-left: 8px;
    gap: 14px;
    background: #f0f0f0;
    color: #111;
}

.ime-grip {
    width: 4px;
    height: 22px;
    margin-right: 2px;
    border-left: 1px solid #aaa;
    border-right: 1px solid #aaa;
}

.ime-zh {
    margin-right: 4px;
    font-size: 26px;
    line-height: 30px;
}

.ime-punc {
    width: 22px;
    font-family: "Liberation Sans", sans-serif;
    font-size: 30px;
    font-weight: bold;
    line-height: 30px;
}

.site-logo {
    position: absolute;
    right: 0;
    bottom: 0;
    display: flex;
    align-items: flex-start;
    gap: 4px;
    width: 200px;
    height: 100px;
    padding: 9px 0 0 3px;
    background: #fff;
}

.logo-right {
    display: flex;
    flex-direction: column;
    padding-top: 3px;
}

.logo-name {
    font-family: "Noto Sans CJK SC", sans-serif;
    font-size: 29px;
    font-weight: 900;
    line-height: 50px;
    color: #111;
    transform: scaleY(1.6);
}

.logo-url {
    width: 143px;
    height: 16px;
    margin-top: 9px;
    padding-left: 3px;
    background: #333;
    color: #fff;
    font-family: "Liberation Mono", monospace;
    font-size: 11px;
    line-height: 16px;
    letter-spacing: 4.900px;
}
```
